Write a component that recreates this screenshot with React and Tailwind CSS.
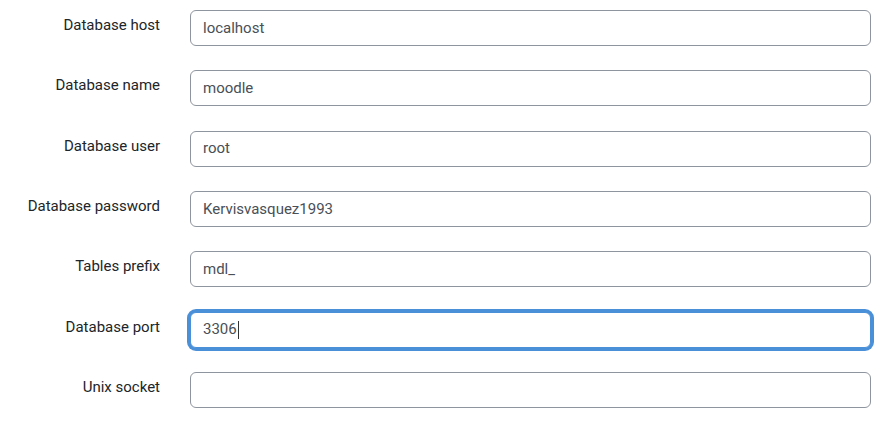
import React from "react";

const rows = [
  { label: "Database host", value: "localhost" },
  { label: "Database name", value: "moodle" },
  { label: "Database user", value: "root" },
  { label: "Database password", value: "Kervisvasquez1993" },
  { label: "Tables prefix", value: "mdl_" },
  { label: "Database port", value: "3306", focus: true },
  { label: "Unix socket", value: "" },
];

export default function App() {
  return (
    <div className="w-[884px] h-[425px] bg-white flex flex-col overflow-hidden" style={{ fontFamily: "Roboto, 'Liberation Sans', sans-serif" }}>
      <div className="flex flex-col pt-[10px]">
        {rows.map((r) => (
          <div key={r.label} className="flex h-[60.33px] shrink-0">
            <div className="w-[160px] text-right text-[15px] leading-[22px] text-[#212529] pt-[4px]">{r.label}</div>
            <div className="ml-[30px] w-[681px]">
              <div
                className={
                  "h-[36px] rounded-[6px] border bg-white flex items-center px-[12px] text-[15px] text-[#495057] " +
                  (r.focus
                    ? "border-[#4a90d9] ring-[3px] ring-[#4a90d9]"
                    : "border-[#8f959e]")
                }
              >
                <span>{r.value}</span>
                {r.focus && <span className="w-px h-[18px] bg-[#333] ml-px" />}
              </div>
            </div>
          </div>
        ))}
      </div>
      <div className="mt-auto h-[4px] bg-[#f5f6f7]" />
    </div>
  );
}
